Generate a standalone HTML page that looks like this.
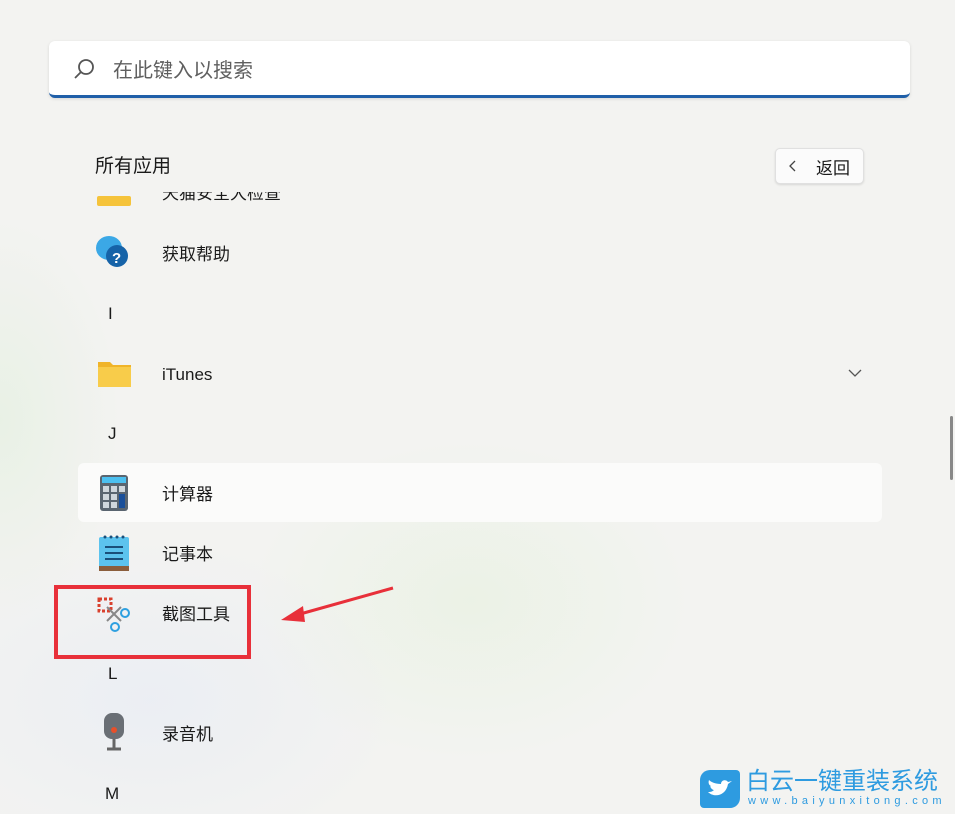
<!DOCTYPE html><html><head><meta charset="utf-8"><style>
body{margin:0;width:955px;height:814px;overflow:hidden;background:#f3f3f1;font-family:"Liberation Sans","Noto Sans CJK SC",sans-serif;position:relative;color:#1a1a1a}
.bg{position:absolute;inset:0;background:radial-gradient(ellipse 220px 160px at 470px 600px,rgba(230,242,222,.6),transparent),radial-gradient(ellipse 120px 200px at 0px 420px,rgba(228,240,224,.7),transparent),radial-gradient(ellipse 250px 160px at 150px 700px,rgba(230,235,245,.6),transparent)}
.a{position:absolute}
.search{left:49px;top:41px;width:861px;height:54px;background:#fff;border-radius:6px;border-bottom:3px solid #1f5fa8;box-shadow:0 1px 3px rgba(0,0,0,.12)}
.t{position:absolute;left:162px;font-size:17px;line-height:20px}
.l{position:absolute;left:108px;font-size:17px}
</style></head><body><div class="bg"></div>
<div class="a search"><svg class="a" style="left:22px;top:15px" width="26" height="26" viewBox="0 0 26 26"><circle cx="15" cy="11" r="7" fill="none" stroke="#555" stroke-width="1.8"/><path d="M10 16L4 22" stroke="#555" stroke-width="1.8"/></svg><span class="a" style="left:64px;top:13px;font-size:20px;color:#5f5f5f">在此键入以搜索</span></div>
<div class="a" style="left:95px;top:151px;font-size:19px">所有应用</div>
<div class="a" style="left:775px;top:148px;width:87px;height:34px;background:#fbfbfb;border:1px solid #e0e0e0;border-radius:5px;box-shadow:0 1px 2px rgba(0,0,0,.12)"><svg class="a" style="left:13px;top:11px" width="8" height="12"><path d="M6 1L1 6l5 5" fill="none" stroke="#444" stroke-width="1.3"/></svg><span class="a" style="left:40px;top:5px;font-size:17px">返回</span></div>
<div class="a" style="left:97px;top:196px;width:34px;height:10px;background:#f5c33b;border-radius:2px"></div>
<div class="t" style="top:184px;clip-path:inset(8px 0 0 0)">天猫安全大检查</div>
<svg class="a" style="left:95px;top:234px" width="38" height="38"><ellipse cx="14" cy="14" rx="13" ry="12" fill="#3ba8e6"/><circle cx="22" cy="22" r="11" fill="#1663a8"/><text x="17" y="29" font-size="15" font-weight="bold" fill="#fff" font-family="Liberation Sans">?</text></svg>
<div class="t" style="top:245px">获取帮助</div>
<div class="l" style="top:304px">I</div>
<svg class="a" style="left:97px;top:358px" width="35" height="30"><path d="M1 4h12l3 3h18v22H1z" fill="#f0b429"/><path d="M1 9h33v20H1z" fill="#f8cc4a"/></svg>
<div class="t" style="top:365px">iTunes</div>
<svg class="a" style="left:848px;top:368px" width="14" height="10"><path d="M1 2l6 6 6-6" fill="none" stroke="#555" stroke-width="1.3"/></svg>
<div class="l" style="top:424px">J</div>
<div class="a" style="left:78px;top:463px;width:804px;height:59px;background:#fbfbfa;border-radius:6px"></div>
<svg class="a" style="left:100px;top:475px" width="28" height="36"><rect width="28" height="36" rx="3" fill="#5a6570"/><rect x="2" y="2" width="24" height="6" fill="#4cc0f0"/><g fill="#cfd6dc"><rect x="3" y="11" width="6" height="6"/><rect x="11" y="11" width="6" height="6"/><rect x="19" y="11" width="6" height="6"/><rect x="3" y="19" width="6" height="6"/><rect x="11" y="19" width="6" height="6"/><rect x="3" y="27" width="6" height="6"/><rect x="11" y="27" width="6" height="6"/></g><rect x="19" y="19" width="6" height="14" fill="#1a4f9a"/></svg>
<div class="t" style="top:485px">计算器</div>
<svg class="a" style="left:99px;top:534px" width="30" height="38"><rect y="3" width="30" height="32" rx="2" fill="#5cc3ee"/><rect y="32" width="30" height="5" fill="#8b5e3c"/><g stroke="#1a4f7a" stroke-width="2"><path d="M6 13h18M6 19h18M6 25h18"/></g><g fill="#1a4f7a"><circle cx="6" cy="3" r="1.5"/><circle cx="12" cy="3" r="1.5"/><circle cx="18" cy="3" r="1.5"/><circle cx="24" cy="3" r="1.5"/></g></svg>
<div class="t" style="top:545px">记事本</div>
<svg class="a" style="left:97px;top:597px" width="36" height="36"><path d="M2 2h12v12H2z" fill="none" stroke="#d9412e" stroke-width="3" stroke-dasharray="3 2"/><path d="M10 10l14 14M24 10L10 24" stroke="#888" stroke-width="2"/><circle cx="28" cy="16" r="4" fill="none" stroke="#2ea0e0" stroke-width="2"/><circle cx="18" cy="30" r="4" fill="none" stroke="#2ea0e0" stroke-width="2"/></svg>
<div class="t" style="top:605px">截图工具</div>
<div class="a" style="left:54px;top:585px;width:189px;height:66px;border:4px solid #e8303a"></div>
<svg class="a" style="left:275px;top:582px" width="125" height="45"><path d="M118 6L18 34" stroke="#e8303a" stroke-width="3"/><path d="M6 38L28 24L30 40z" fill="#e8303a"/></svg>
<div class="l" style="top:664px">L</div>
<svg class="a" style="left:101px;top:713px" width="26" height="40"><rect x="3" y="0" width="20" height="26" rx="8" fill="#6a6f75"/><circle cx="13" cy="17" r="3" fill="#e8502a"/><path d="M13 26v9M6 36h14" stroke="#666" stroke-width="3"/></svg>
<div class="t" style="top:725px">录音机</div>
<div class="l" style="top:784px;left:105px">M</div>
<div class="a" style="left:950px;top:416px;width:3px;height:64px;background:#888;border-radius:2px"></div>
<div class="a" style="left:700px;top:770px;width:40px;height:38px;background:#2e9be0;border-radius:10px 4px 10px 4px"></div>
<svg class="a" style="left:706px;top:778px" width="28" height="22"><path d="M2 14c6 6 18 4 20-8l4-3-4 1c-2-3-7-2-7 2C9 6 5 4 3 2c-1 3 0 5 2 6-2 0 1 4 3 4-2 2-4 2-6 2z" fill="#fff"/></svg>
<div class="a" style="left:746px;top:768px;font-size:24px;color:#2e9be0;line-height:28px">白云一键重装系统</div>
<div class="a" style="left:748px;top:795px;font-size:11px;color:#2e9be0;letter-spacing:4.3px">www.baiyunxitong.com</div>
</body></html>
